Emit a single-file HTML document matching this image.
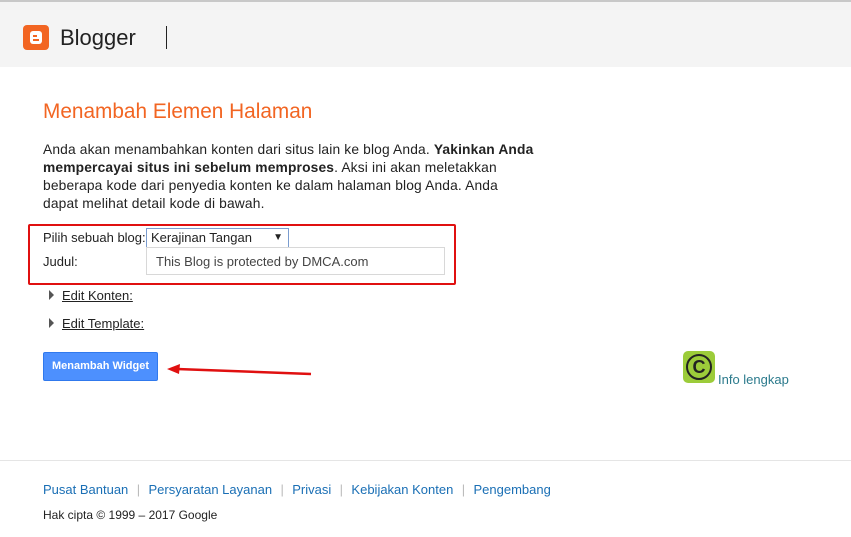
<!DOCTYPE html>
<html><head><style>
body{margin:0;width:851px;height:537px;background:#fff;font-family:"Liberation Sans",Arial,sans-serif;position:relative;overflow:hidden;color:#222}
.hdr{position:absolute;left:0;top:0;width:851px;height:67px;background:#f4f4f4;border-top:2px solid #c8c8c8;box-sizing:border-box}
.a{position:absolute}
a{color:#1a6fb5;text-decoration:none}
.u{color:#222;text-decoration:underline;font-size:13px}
.tri{width:0;height:0;border-left:5px solid #555;border-top:5px solid transparent;border-bottom:5px solid transparent}
.sep{color:#bbb;margin:0 8.4px}
</style></head><body>
<div class="hdr"></div>
<div class="a" style="left:23px;top:25px;width:26px;height:25px;background:#f26522;border-radius:4px"></div>
<div class="a" style="left:30px;top:31px;width:12px;height:13px;background:#fff;border-radius:3px"></div>
<div class="a" style="left:33px;top:35px;width:4px;height:2px;background:#f26522"></div>
<div class="a" style="left:33px;top:39px;width:6px;height:2px;background:#f26522"></div>
<div class="a" style="left:60px;top:25px;font-size:22px;color:#222">Blogger</div>
<div class="a" style="left:166px;top:26px;width:1px;height:23px;background:#222"></div>
<div class="a" style="left:43px;top:100px;font-size:20.8px;color:#f26522">Menambah Elemen Halaman</div>
<div class="a" style="left:43px;top:141px;font-size:13.8px;letter-spacing:0.15px;line-height:18px;white-space:nowrap">Anda akan menambahkan konten dari situs lain ke blog Anda. <b>Yakinkan Anda</b><br><b>mempercayai situs ini sebelum memproses</b>. Aksi ini akan meletakkan<br>beberapa kode dari penyedia konten ke dalam halaman blog Anda. Anda<br>dapat melihat detail kode di bawah.</div>
<div class="a" style="left:28px;top:224px;width:424px;height:57px;border:2px solid #e01010;border-radius:2px"></div>
<div class="a" style="left:43px;top:230px;font-size:13px">Pilih sebuah blog:</div>
<div class="a" style="left:146px;top:228px;width:137px;height:18px;border:1px solid #7a9ccf;font-size:13px;line-height:18px;padding-left:4px;box-sizing:content-box">Kerajinan Tangan<span style="position:absolute;right:5px;font-size:10px">▼</span></div>
<div class="a" style="left:43px;top:254px;font-size:13px">Judul:</div>
<div class="a" style="left:146px;top:247px;width:299px;height:28px;border:1px solid #d8d8d8;font-size:13px;line-height:28px;padding-left:9px;box-sizing:border-box;color:#444">This Blog is protected by DMCA.com</div>
<div class="a tri" style="left:49px;top:290px"></div>
<div class="a u" style="left:62px;top:288px">Edit Konten:</div>
<div class="a tri" style="left:49px;top:318px"></div>
<div class="a u" style="left:62px;top:316px">Edit Template:</div>
<div class="a" style="left:43px;top:352px;width:115px;height:29px;background:#4d90fe;border:1px solid #3079ed;box-sizing:border-box;border-radius:2px;color:#fff;font-size:11px;font-weight:bold;text-align:center;line-height:27px">Menambah Widget</div>
<svg class="a" style="left:165px;top:362px" width="150" height="16"><line x1="12" y1="7" x2="146" y2="12" stroke="#e01010" stroke-width="2.5"/><polygon points="2,7 15,2 14,12" fill="#e01010"/></svg>
<div class="a" style="left:683px;top:351px;width:32px;height:32px;background:#9ccc3a;border-radius:5px"></div>
<div class="a" style="left:686px;top:354px;width:22px;height:22px;border:2px solid #222;border-radius:50%;font-size:18px;font-weight:bold;text-align:center;line-height:22px;color:#222">C</div>
<div class="a" style="left:718px;top:372px;font-size:13px;color:#2b7a8c">Info lengkap</div>
<div class="a" style="left:0;top:460px;width:851px;height:1px;background:#e5e5e5"></div>
<div class="a" style="left:43px;top:482px;font-size:13px;color:#1a6fb5;white-space:nowrap"><a>Pusat Bantuan</a><span class="sep">|</span><a>Persyaratan Layanan</a><span class="sep">|</span><a>Privasi</a><span class="sep">|</span><a>Kebijakan Konten</a><span class="sep">|</span><a>Pengembang</a></div>
<div class="a" style="left:43px;top:508px;font-size:12px;color:#222">Hak cipta © 1999 – 2017 Google</div>
</body></html>
